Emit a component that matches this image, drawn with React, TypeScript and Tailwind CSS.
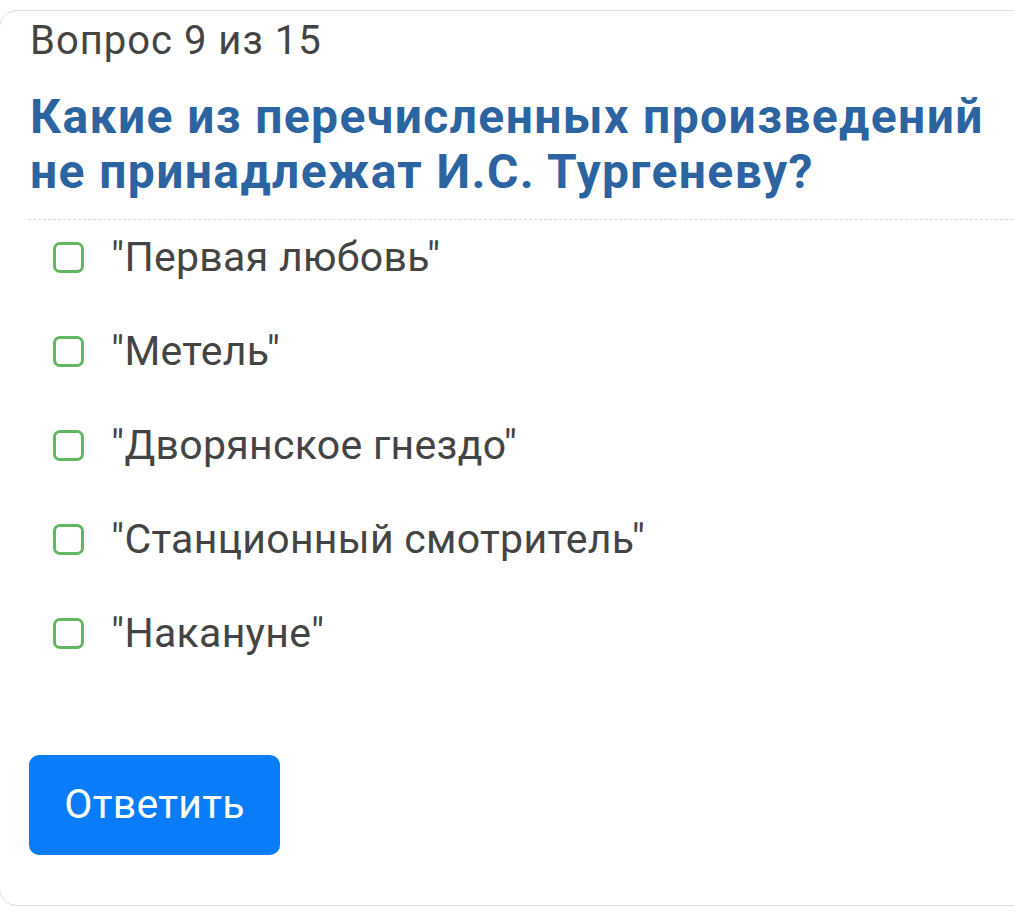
import React from 'react'

const answers = [
  '"Первая любовь"',
  '"Метель"',
  '"Дворянское гнездо"',
  '"Станционный смотритель"',
  '"Накануне"',
]

const App = () => {
  return (
    <div className="bg-white w-[1014px] h-[911px] overflow-hidden pt-[10px] font-['Roboto',sans-serif]">
      <div className="ml-[-1px] w-[1040px] h-[896px] border border-[#dcdcdc] rounded-[18px] bg-white">
        <div className="pl-[30px] pt-[7px] text-[40px] leading-[46px] tracking-[1px] text-[#444]">Вопрос 9 из 15</div>
        <h1 className="pl-[30px] pt-[25px] w-[1010px] text-[48px] leading-[55px] tracking-[1.4px] font-bold text-[#2b64a0]">
          Какие из перечисленных произведений не принадлежат И.С. Тургеневу?
        </h1>
        <div className="ml-[28px] mt-[20px] border-t border-dashed border-[#d9d9d9]"></div>
        <div className="flex flex-col gap-[46px] pl-[53px] pt-[13px]">
          {answers.map((a) => (
            <label key={a} className="flex items-center h-[48px]">
              <span className="w-[31px] h-[31px] rounded-[7px] border-[3px] border-[#62b862] shrink-0"></span>
              <span className="ml-[27px] text-[41px] leading-[48px] tracking-[0.3px] text-[#444]">{a}</span>
            </label>
          ))}
        </div>
        <button className="ml-[29px] mt-[98px] w-[251px] h-[100px] rounded-[10px] bg-[#087cf9] text-white text-[41px] tracking-[0.3px]">
          Ответить
        </button>
      </div>
    </div>
  )
}

export default App
